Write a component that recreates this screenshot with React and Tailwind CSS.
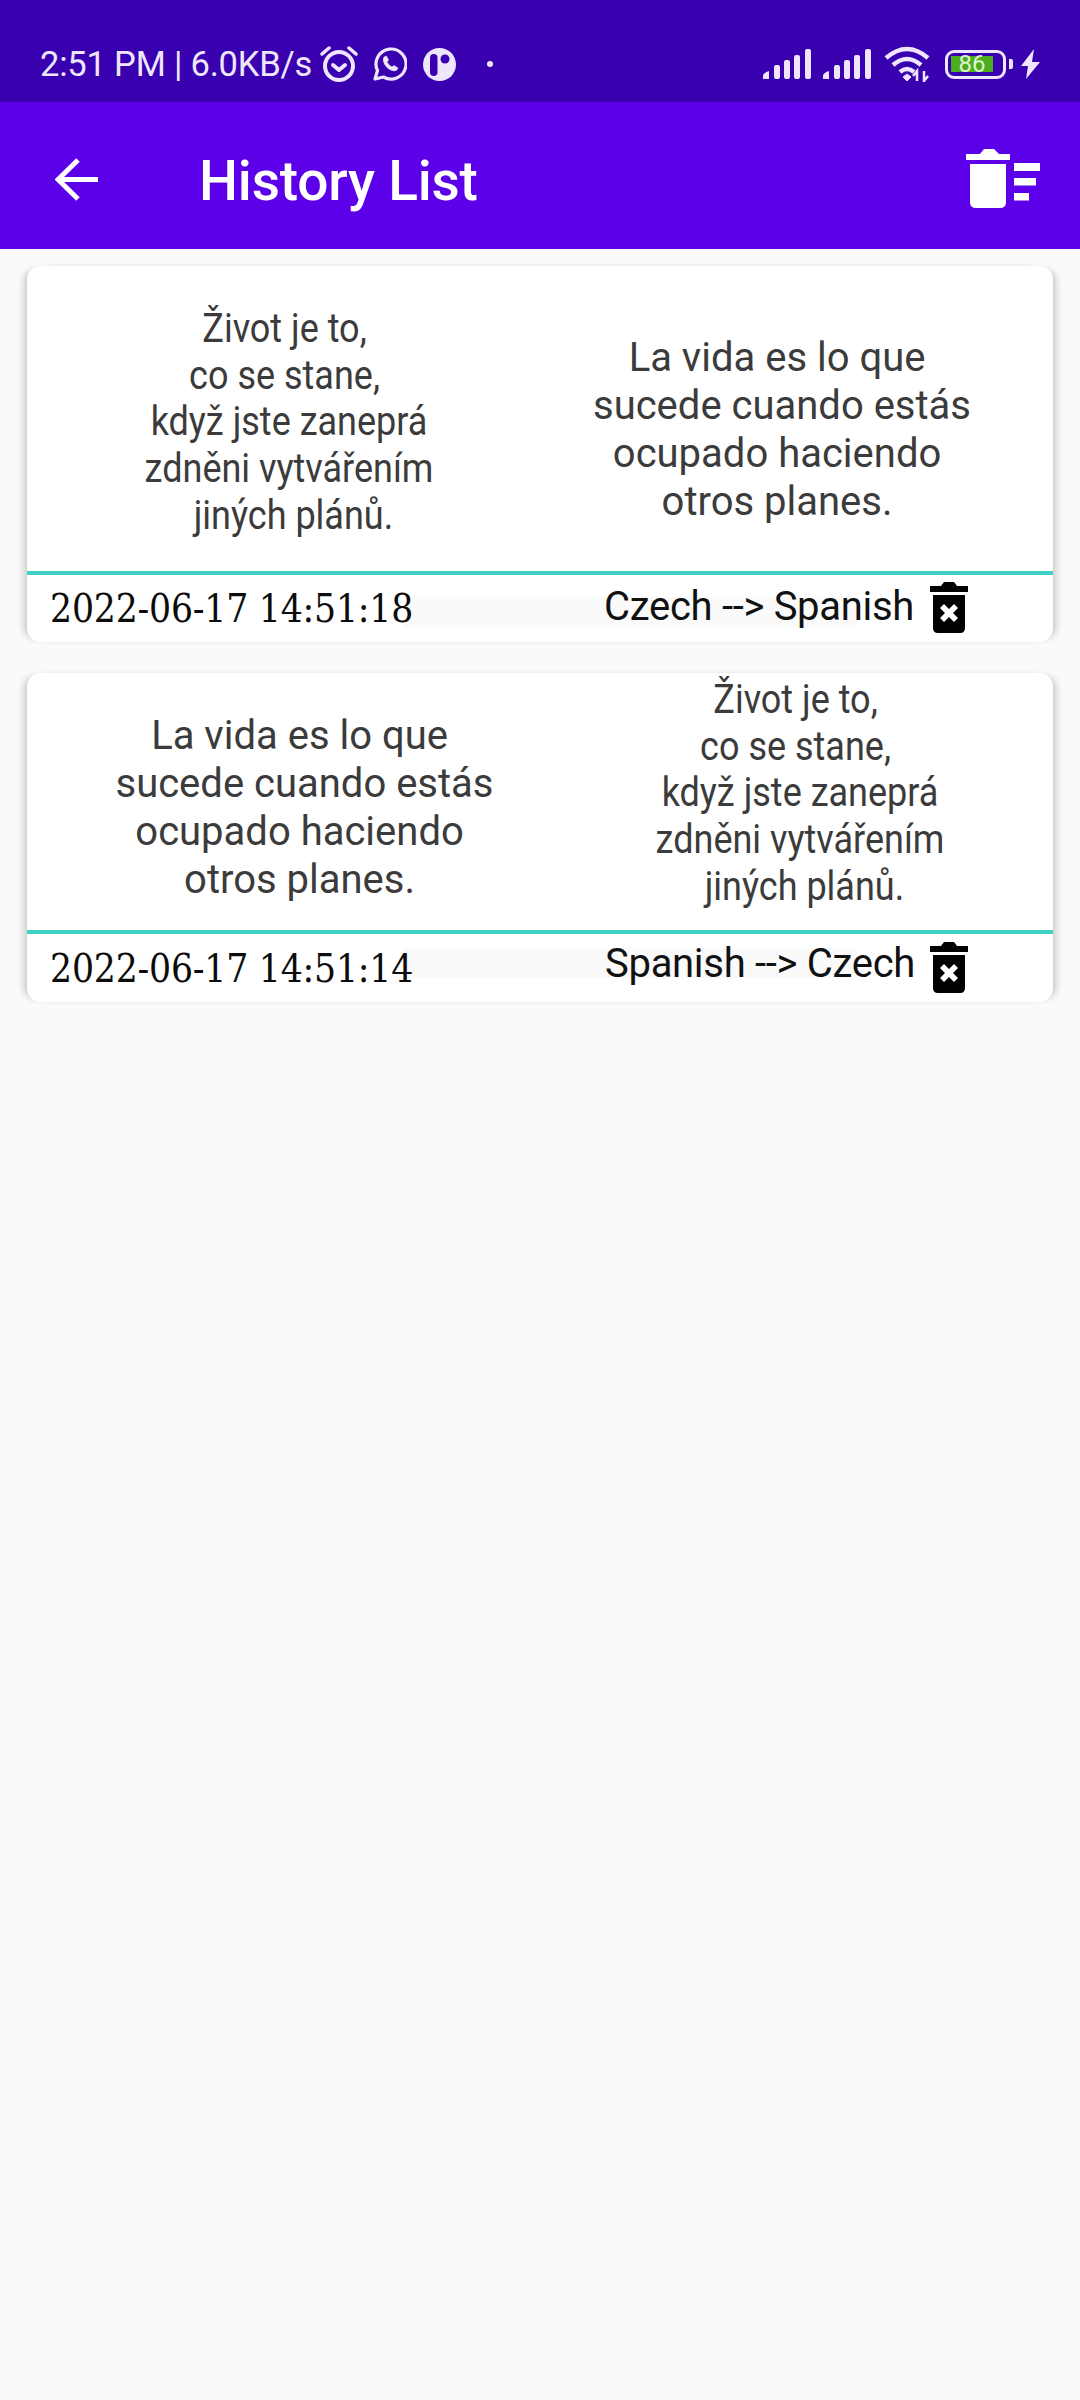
import React from "react";

const roboto = "font-['Roboto',sans-serif]";

function Signal({ className }) {
  return (
    <svg className={className} width="48" height="30" viewBox="0 0 48 30" fill="#efe6fd">
      <path d="M0 30v-3q0-3 6-5v8z" />
      <rect x="11" y="16" width="6" height="14" rx="2" />
      <rect x="21" y="11" width="6" height="19" rx="2" />
      <rect x="31" y="6" width="6" height="24" rx="2" />
      <rect x="42" y="0" width="6" height="30" rx="2" />
    </svg>
  );
}

function SmallTrash() {
  return (
    <svg className="shrink-0" width="38" height="52" viewBox="0 0 38 52" fill="#000">
      <path d="M0 5h11l3-4h10l3 4h11v6H0z" />
      <path fillRule="evenodd" d="M3 14h32v33q0 5-5 5H8q-5 0-5-5zM10 27l4-4 5 5 5-5 4 4-5 5 5 5-4 4-5-5-5 5-4-4 5-5z" />
    </svg>
  );
}

function Card({ children, date, label, cardClass, labelClass, stripClass, iconClass, dateClass, gapClass }) {
  return (
    <div className={`mx-[27px] flex flex-col rounded-[14px] bg-white shadow-[-7px_0_7px_-4px_rgba(0,0,0,0.2),7px_0_7px_-4px_rgba(0,0,0,0.2)] ${cardClass}`}>
      {children}
      <div className="h-[4px] bg-[#40d0c6]" />
      <div className="relative flex flex-1 items-start">
        <div className={`absolute left-[378px] h-[30px] w-[452px] bg-[#fafafa] ${stripClass}`} />
        <span className={`relative ml-[23px] font-['DejaVu_Serif',serif] text-[38.6px] leading-[50px] tracking-[-0.2px] text-[#0c0c0c] [font-stretch:condensed] ${dateClass}`}>
          {date}
        </span>
        <div className={`relative ml-auto mr-[85px] flex items-start ${gapClass}`}>
          <span className={`${roboto} text-[40px] leading-[48px] tracking-[-0.3px] text-[#111] ${labelClass}`}>{label}</span>
          <div className={iconClass}>
            <SmallTrash />
          </div>
        </div>
      </div>
    </div>
  );
}

function Czech() {
  return (
    <p className={`${roboto} scale-x-[0.9] text-center text-[40px] leading-[46.7px] text-[#3b3b3b]`}>
      Život je to,{"\u00a0"}
      <br />
      co se stane,{"\u00a0"}
      <br />
      když jste zaneprá
      <br />
      zdněni vytvářením
      <br />
      {"\u00a0"}jiných plánů.
    </p>
  );
}

function Spanish() {
  return (
    <p className={`${roboto} text-center text-[40px] leading-[48px] text-[#3b3b3b]`}>
      La vida es lo que{"\u00a0"}
      <br />
      sucede cuando estás
      <br />
      ocupado haciendo{"\u00a0"}
      <br />
      otros planes.{"\u00a0"}
    </p>
  );
}

export default function App() {
  return (
    <div className="flex min-h-[2400px] w-[1080px] flex-col bg-[#fafafa]">
      <header className={`flex h-[102px] items-center bg-[#3800ae] pl-[40px] pr-[40px] pt-[26px] text-[#efe6fd] ${roboto}`}>
        <span className="text-[34.5px] leading-[40px] tracking-[-0.2px]">2:51 PM | 6.0KB/s</span>
        <svg className="ml-[8px]" width="38" height="38" viewBox="0 0 38 38" fill="none" stroke="#efe6fd" strokeWidth="4">
          <circle cx="19" cy="21" r="14" />
          <path d="M13 20l6 5 6-5" strokeLinecap="round" strokeLinejoin="round" />
          <path d="M2 9l7-6M36 9l-7-6" strokeWidth="3.5" strokeLinecap="round" />
        </svg>
        <svg className="ml-[15px]" width="34" height="34" viewBox="0 0 34 34" fill="none" stroke="#efe6fd" strokeWidth="3.2">
          <path d="M2 32l2.500-8.500A15 15 0 1 1 10.500 30z" strokeLinejoin="round" />
          <path d="M11 10q-2 3 1 8t9 6q3 0 4-3l-4-2.500-2 1.500q-3-1-5-5l1.500-2-2-4z" fill="#efe6fd" strokeWidth="0.6" />
        </svg>
        <svg className="ml-[16px]" width="33" height="33" viewBox="0 0 33 33">
          <circle cx="16.500" cy="16.500" r="16.500" fill="#efe6fd" />
          <rect x="7" y="6" width="7.500" height="22" rx="3.750" fill="#3800ae" />
          <circle cx="22" cy="11" r="4.500" fill="#3800ae" />
        </svg>
        <span className="ml-[31px] h-[6px] w-[6px] rounded-full bg-[#efe6fd]" />
        <div className="ml-auto flex items-center">
          <Signal />
          <Signal className="ml-[12px]" />
          <svg className="ml-[13px]" width="46" height="36" viewBox="0 0 46 36" fill="none" stroke="#efe6fd" strokeWidth="4.500">
            <path d="M2 12Q23-6 44 12" />
            <path d="M9 19Q23 7 37 19" />
            <path d="M16 26q7-6 14 0" />
            <path d="M19 31l4-3 4 3-4 4z" fill="#efe6fd" strokeWidth="1" />
            <path d="M33 35V25l-4 5M40 25v10l4-5" strokeWidth="2.500" />
          </svg>
          <div className="relative ml-[15px] flex h-[29px] w-[61px] items-center rounded-[9px] border-[3.5px] border-[#efe6fd] pl-[3px]">
            <div className="flex h-[16px] w-[42px] items-center justify-center bg-[#4cae1e] text-[24px] leading-[16px] text-[#dcf5cf]">
              86
            </div>
          </div>
          <div className="ml-[3px] h-[10px] w-[4px] rounded-r-[2px] bg-[#efe6fd]" />
          <svg className="ml-[8px]" width="19" height="30" viewBox="0 0 19 30" fill="#efe6fd">
            <path d="M13 0L0 17h7L5 30 19 13h-8z" />
          </svg>
        </div>
      </header>

      <div className="flex h-[147px] items-center bg-[#5d00ea] pl-[55px] pr-[40px] pt-[8px]">
        <svg width="44" height="44" viewBox="0 0 44 44" fill="none" stroke="#fff" strokeWidth="5">
          <path d="M43 21.500H4M23 2L3 21.500 23 41" strokeLinejoin="miter" />
        </svg>
        <h1 className={`${roboto} ml-[100px] mt-[2px] text-[55px] font-medium leading-[60px] tracking-[-0.2px] text-white`}>History List</h1>
        <svg className="ml-auto mb-[4px]" width="74" height="60" viewBox="0 0 74 60" fill="#fff">
          <path d="M0 6h14l4-5h10l5 5h11v6H0z" />
          <path d="M4 16h36v38q0 6-6 6H10q-6 0-6-6z" />
          <rect x="48" y="15" width="26" height="8" />
          <rect x="48" y="30" width="22" height="7.500" />
          <rect x="48" y="45" width="15" height="7.500" />
        </svg>
      </div>

      <main className="flex flex-col gap-[31px] pt-[17px]">
        <Card
          date="2022-06-17 14:51:18"
          label="Czech --> Spanish"
          cardClass="h-[376px]"
          labelClass="mt-[8px]"
          stripClass="top-[22px]"
          iconClass="mt-[6px]"
          dateClass="mt-[9px]"
          gapClass="gap-[16px]"
        >
          <div className="flex h-[305px] items-start">
            <div className="w-[524px] pt-[40px]">
              <Czech />
            </div>
            <div className="w-[462px] pt-[68px]">
              <Spanish />
            </div>
          </div>
        </Card>
        <Card
          date="2022-06-17 14:51:14"
          label="Spanish --> Czech"
          cardClass="h-[329px]"
          labelClass="mt-[6px]"
          stripClass="top-[14px]"
          iconClass="mt-[7px]"
          dateClass="mt-[10px]"
          gapClass="gap-[15px]"
        >
          <div className="flex h-[257px] items-start">
            <div className="w-[555px] pt-[39px]">
              <Spanish />
            </div>
            <div className="w-[436px] pt-[4px]">
              <Czech />
            </div>
          </div>
        </Card>
      </main>
    </div>
  );
}
